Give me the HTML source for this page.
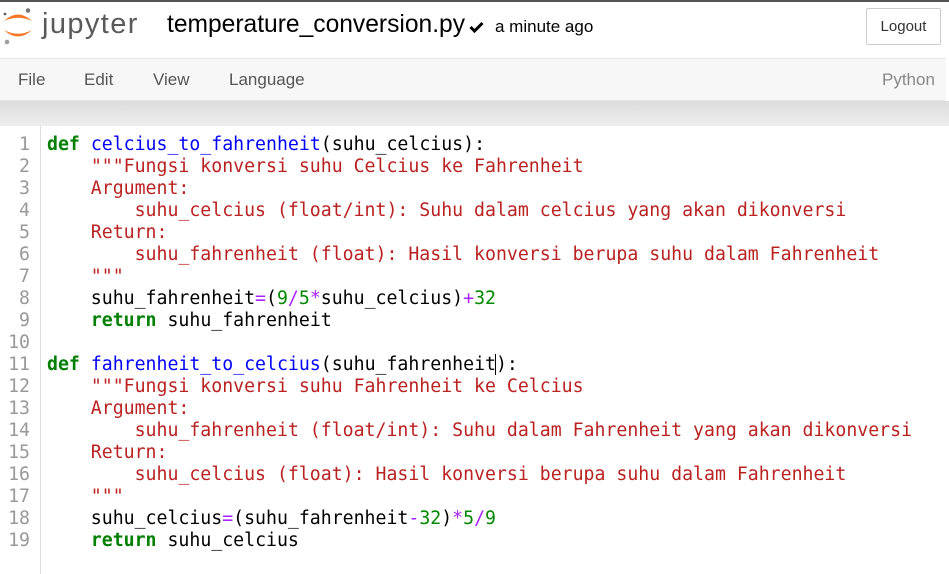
<!DOCTYPE html>
<html><head><meta charset="utf-8">
<style>
html,body{margin:0;padding:0;width:949px;height:574px;overflow:hidden;background:#fff;font-family:"Liberation Sans",sans-serif;}
#top{position:absolute;left:0;top:0;width:949px;height:2px;background:#555;}
#logo{position:absolute;left:0;top:2px;}
#jtext{position:absolute;left:42px;top:8px;font-size:29px;color:#5a5a5a;letter-spacing:1.4px;}
#title{position:absolute;left:167px;top:11px;font-size:24.6px;color:#000;}
#chk{position:absolute;left:469px;top:21px;}
#saved{position:absolute;left:495px;top:17px;font-size:17px;color:#000;}
#logout{position:absolute;left:866px;top:8px;width:73px;height:35px;border:1px solid #ccc;border-radius:2px;font-size:15px;color:#333;text-align:center;line-height:35px;}
#menu{position:absolute;left:0;top:58px;width:946px;height:41px;background:#f7f7f7;border-top:1px solid #e7e7e7;border-bottom:1px solid #e7e7e7;}
.mi{position:absolute;top:11px;font-size:17px;color:#555;}
#shadow{position:absolute;left:0;top:101px;width:949px;height:25px;background:linear-gradient(#dcdcdc,#eeeeee);}
#code{position:absolute;left:0;top:126px;width:949px;height:448px;background:#fff;}
#gut{position:absolute;left:0;top:0;width:40px;height:448px;border-right:1px solid #ddd;background:#fff;}
.ln{position:absolute;left:0;width:30px;text-align:right;color:#999;font-family:"DejaVu Sans Mono",monospace;font-size:18.2px;line-height:22px;}
pre{position:absolute;left:47px;top:8px;margin:0;font-family:"DejaVu Sans Mono",monospace;font-size:18.2px;line-height:22px;color:#000;}
.k{color:#008000;font-weight:bold}.f{color:#0000ff}.s{color:#ba2121}.o{color:#aa22ff}.n{color:#008800}
.cur{border-left:1px solid #000;margin-left:-1px;}
</style></head><body>
<div id="top"></div>
<svg id="logo" width="36" height="44" viewBox="0 0 36 44">
<path d="M4 19 Q18 6 32 19 Q18 12.5 4 19Z" fill="#f37726"/>
<path d="M4 28 Q18 41 32 28 Q18 35.5 4 28Z" fill="#f37726"/>
<circle cx="28" cy="8.5" r="2.3" fill="#767677"/>
<circle cx="7" cy="40" r="2.3" fill="#9e9e9e"/>
<circle cx="5" cy="12" r="1.4" fill="#616262"/>
</svg>
<div id="jtext">jupyter</div>
<div id="title">temperature_conversion.py</div>
<svg id="chk" width="15" height="12" viewBox="0 0 15 12"><path d="M1.5 6 L5.5 10 L13.5 2" stroke="#000" stroke-width="3" fill="none"/></svg>
<div id="saved">a minute ago</div>
<div id="logout">Logout</div>
<div id="menu">
<span class="mi" style="left:18px">File</span>
<span class="mi" style="left:84px">Edit</span>
<span class="mi" style="left:153px">View</span>
<span class="mi" style="left:229px">Language</span>
<span class="mi" style="left:882px;color:#888">Python</span>
</div>
<div id="shadow"></div>
<div id="code">
<div id="gut">
<div class="ln" style="top:8px">1<br>2<br>3<br>4<br>5<br>6<br>7<br>8<br>9<br>10<br>11<br>12<br>13<br>14<br>15<br>16<br>17<br>18<br>19</div>
</div>
<pre><span class="k">def</span> <span class="f">celcius_to_fahrenheit</span>(suhu_celcius):
    <span class="s">"""Fungsi konversi suhu Celcius ke Fahrenheit
    Argument:
        suhu_celcius (float/int): Suhu dalam celcius yang akan dikonversi
    Return:
        suhu_fahrenheit (float): Hasil konversi berupa suhu dalam Fahrenheit
    """</span>
    suhu_fahrenheit<span class="o">=</span>(<span class="n">9</span><span class="o">/</span><span class="n">5</span><span class="o">*</span>suhu_celcius)<span class="o">+</span><span class="n">32</span>
    <span class="k">return</span> suhu_fahrenheit

<span class="k">def</span> <span class="f">fahrenheit_to_celcius</span>(suhu_fahrenheit<span class="cur"></span>):
    <span class="s">"""Fungsi konversi suhu Fahrenheit ke Celcius
    Argument:
        suhu_fahrenheit (float/int): Suhu dalam Fahrenheit yang akan dikonversi
    Return:
        suhu_celcius (float): Hasil konversi berupa suhu dalam Fahrenheit
    """</span>
    suhu_celcius<span class="o">=</span>(suhu_fahrenheit<span class="o">-</span><span class="n">32</span>)<span class="o">*</span><span class="n">5</span><span class="o">/</span><span class="n">9</span>
    <span class="k">return</span> suhu_celcius</pre>
</div>
</body></html>
